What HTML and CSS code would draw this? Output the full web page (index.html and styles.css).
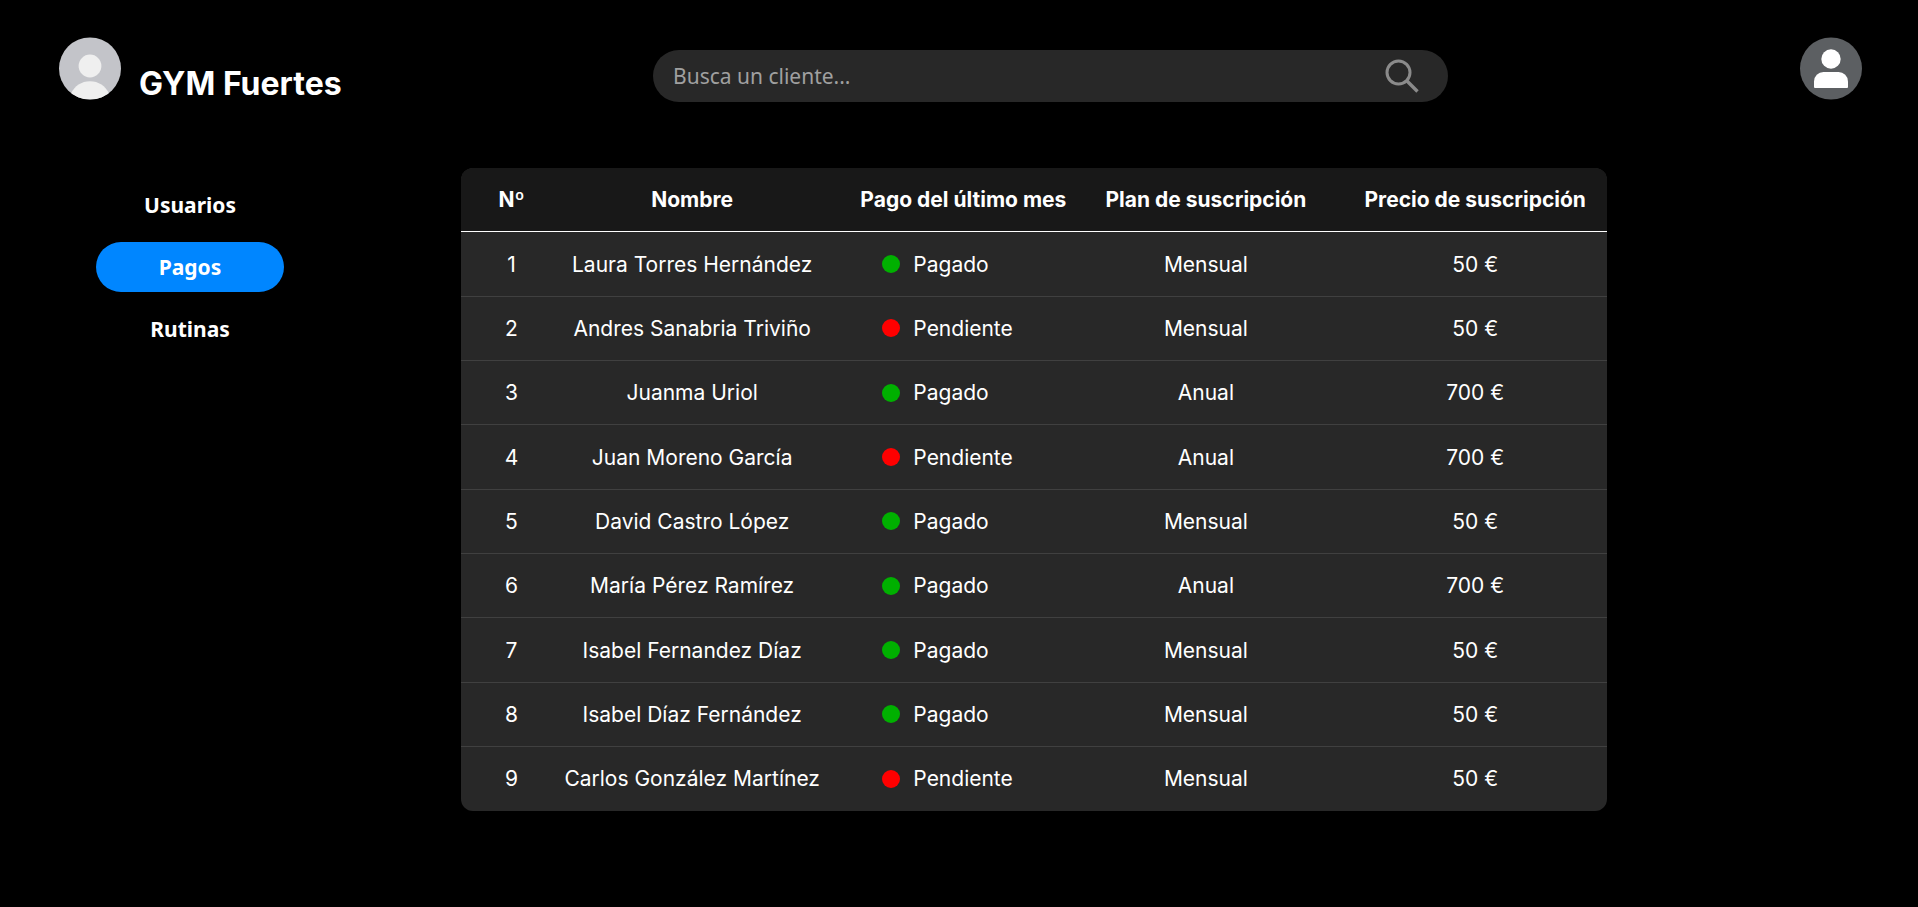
FILE: index.html
```
<!DOCTYPE html>
<html lang="es">
<head>
<meta charset="utf-8">
<meta name="viewport" content="width=device-width, initial-scale=1">
<title>GYM Fuertes - Pagos</title>
<link rel="stylesheet" href="styles.css">
</head>
<body>
<header class="topbar">
  <div class="brand">
    <svg class="avatar" viewBox="0 0 62 62" aria-hidden="true">
      <defs><clipPath id="disc"><circle cx="31" cy="31" r="31"/></clipPath></defs>
      <circle cx="31" cy="31" r="31" fill="#c3c4c9"/>
      <g fill="#efefef" clip-path="url(#disc)">
        <circle cx="31" cy="28.5" r="11.4"/>
        <path d="M12 56c3.500-7.500 10.500-12.300 19-12.300S46.500 48.500 50 56v6H12z"/>
      </g>
    </svg>
    <h1 class="brand-name">GYM Fuertes</h1>
  </div>
  <form class="search" role="search">
    <input class="search-input" type="text" placeholder="Busca un cliente..." aria-label="Busca un cliente">
    <button class="search-button" type="button" aria-label="Buscar">
      <svg class="search-icon" viewBox="0 0 34 34" fill="none" stroke="#8b8b8b" aria-hidden="true">
        <circle cx="13.500" cy="13.500" r="11.500" stroke-width="3"/>
        <path d="M21.500 21.500L32.500 32.500" stroke-width="3.400"/>
      </svg>
    </button>
  </form>
  <button class="profile" type="button" aria-label="Perfil">
    <svg class="avatar" viewBox="0 0 62 62" aria-hidden="true">
      <circle cx="31" cy="31" r="31" fill="#5c5f62"/>
      <circle cx="31" cy="21.500" r="9.700" fill="#fff"/>
      <path d="M14 49.500V44a9.500 9.500 0 0 1 9.500-9.500h15A9.500 9.500 0 0 1 48 44v5.500a1 1 0 0 1-1 1H15a1 1 0 0 1-1-1z" fill="#fff"/>
    </svg>
  </button>
</header>
<div class="layout">
  <nav class="menu">
    <a class="menu-link" href="#usuarios">Usuarios</a>
    <a class="menu-link active" href="#pagos" aria-current="page">Pagos</a>
    <a class="menu-link" href="#rutinas">Rutinas</a>
  </nav>
  <main>
    <table class="payments">
      <colgroup><col class="col-number"><col class="col-name"><col class="col-status"><col class="col-plan"><col class="col-price"></colgroup>
      <thead>
        <tr><th class="number">Nº</th><th>Nombre</th><th>Pago del último mes</th><th>Plan de suscripción</th><th>Precio de suscripción</th></tr>
      </thead>
      <tbody>
        <tr><td class="number">1</td><td>Laura Torres Hernández</td><td><span class="status paid">Pagado</span></td><td>Mensual</td><td>50 €</td></tr>
        <tr><td class="number">2</td><td>Andres Sanabria Triviño</td><td><span class="status pending">Pendiente</span></td><td>Mensual</td><td>50 €</td></tr>
        <tr><td class="number">3</td><td>Juanma Uriol</td><td><span class="status paid">Pagado</span></td><td>Anual</td><td>700 €</td></tr>
        <tr><td class="number">4</td><td>Juan Moreno García</td><td><span class="status pending">Pendiente</span></td><td>Anual</td><td>700 €</td></tr>
        <tr><td class="number">5</td><td>David Castro López</td><td><span class="status paid">Pagado</span></td><td>Mensual</td><td>50 €</td></tr>
        <tr><td class="number">6</td><td>María Pérez Ramírez</td><td><span class="status paid">Pagado</span></td><td>Anual</td><td>700 €</td></tr>
        <tr><td class="number">7</td><td>Isabel Fernandez Díaz</td><td><span class="status paid">Pagado</span></td><td>Mensual</td><td>50 €</td></tr>
        <tr><td class="number">8</td><td>Isabel Díaz Fernández</td><td><span class="status paid">Pagado</span></td><td>Mensual</td><td>50 €</td></tr>
        <tr><td class="number">9</td><td>Carlos González Martínez</td><td><span class="status pending">Pendiente</span></td><td>Mensual</td><td>50 €</td></tr>
      </tbody>
    </table>
  </main>
</div>
</body>
</html>
```
FILE: styles.css
```
* {
  box-sizing: border-box;
}

body {
  margin: 0;
  background: #000;
  color: #fff;
  font-family: Inter, sans-serif;
  font-size: 21px;
}

.topbar {
  display: grid;
  grid-template-columns: 594fr 795fr 414fr;
  align-items: start;
  padding: 37px 56px 0 59px;
}

.brand {
  display: flex;
  gap: 18px;
}

.avatar {
  display: block;
  flex: none;
  width: 62px;
  height: 63px;
}

.brand-name {
  margin: 0;
  padding-top: 27px;
  font-size: 32px;
  line-height: 40px;
  font-weight: 700;
  white-space: nowrap;
}

.search {
  display: flex;
  align-items: center;
  height: 52px;
  margin-top: 13px;
  padding: 0 29px 0 20px;
  border-radius: 26px;
  background: #282828;
}

.search-input {
  flex: 1;
  min-width: 0;
  padding: 0;
  border: 0;
  outline: 0;
  background: transparent;
  color: #fff;
  font: 21px "Noto Sans", sans-serif;
}

.search-input::placeholder {
  color: #a0a0a0;
  opacity: 1;
}

.search-button,
.profile {
  padding: 0;
  border: 0;
  background: transparent;
  cursor: pointer;
}

.search-icon {
  display: block;
  width: 34px;
  height: 34px;
}

.profile {
  justify-self: end;
}

.layout {
  display: grid;
  grid-template-columns: 461fr 1146fr 311fr;
  padding-top: 64px;
}

.menu {
  display: flex;
  flex-direction: column;
  gap: 12px;
  width: 188px;
  margin: 12px 0 0 96px;
}

.menu-link {
  padding: 10px 0;
  border-radius: 25px;
  color: #fff;
  font: 700 21px/30px "Noto Sans", sans-serif;
  text-align: center;
  text-decoration: none;
}

.menu-link.active {
  background: #0086ff;
}

.payments {
  width: 100%;
  table-layout: fixed;
  border-collapse: separate;
  border-spacing: 0;
  border-radius: 12px;
  overflow: hidden;
  background: #282828;
  text-align: center;
  white-space: nowrap;
}

.payments th,
.payments td {
  padding: 1vw 0;
  line-height: 25px;
}

.payments th {
  border-bottom: 1px solid #fff;
  background: #181818;
}

.payments td {
  border-bottom: 1px solid #404040;
}

.payments tr:last-child td {
  border-bottom-color: transparent;
}

.payments thead tr:last-child th {
  border-bottom-color: #fff;
}

.col-number { width: 65px; }
.col-name { width: 29%; }
.col-status { width: 210px; }
.col-plan { width: 24%; }
.col-price { width: 23%; }

.payments .number {
  padding-left: 36px;
}

.status {
  display: flex;
  align-items: center;
  gap: 13px;
  padding-left: 24px;
}

.status::before {
  content: "";
  width: 18px;
  height: 18px;
  border-radius: 50%;
}

.paid::before {
  background: #00b000;
}

.pending::before {
  background: #f00;
}
```
